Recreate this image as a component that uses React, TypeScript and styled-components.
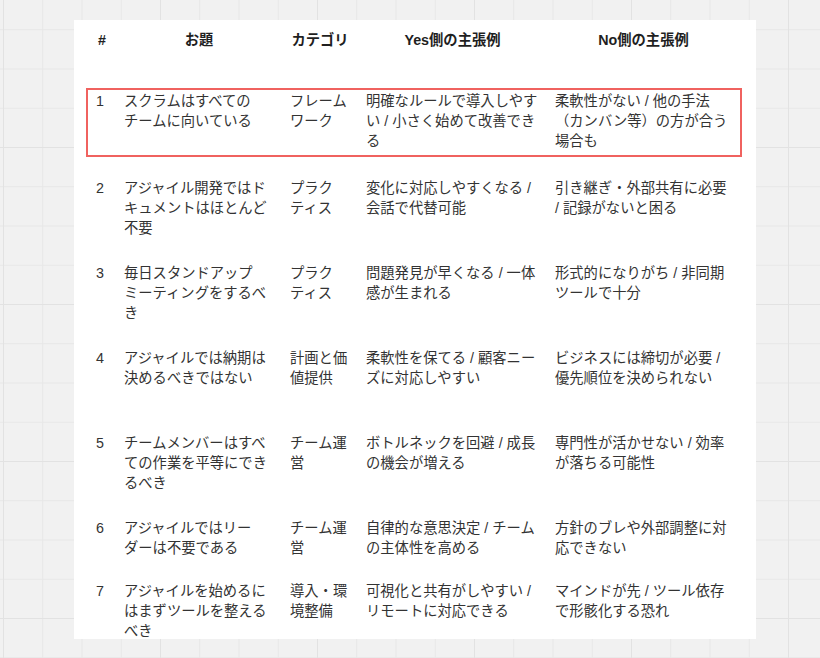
import React from 'react';
import styled, { createGlobalStyle } from 'styled-components';

type Topic = {
  no: number;
  title: string;
  category: string;
  yes: string;
  no_: string;
  height?: number;
  highlighted?: boolean;
};

const topics: Topic[] = [
  {
    no: 1,
    title: 'スクラムはすべてのチームに向いている',
    category: 'フレームワーク',
    yes: '明確なルールで導入しやすい / 小さく始めて改善できる',
    no_: '柔軟性がない / 他の手法（カンバン等）の方が合う場合も',
    height: 87,
    highlighted: true,
  },
  {
    no: 2,
    title: 'アジャイル開発ではドキュメントはほとんど不要',
    category: 'プラクティス',
    yes: '変化に対応しやすくなる / 会話で代替可能',
    no_: '引き継ぎ・外部共有に必要 / 記録がないと困る',
    height: 85,
  },
  {
    no: 3,
    title: '毎日スタンドアップミーティングをするべき',
    category: 'プラクティス',
    yes: '問題発見が早くなる / 一体感が生まれる',
    no_: '形式的になりがち / 非同期ツールで十分',
    height: 85,
  },
  {
    no: 4,
    title: 'アジャイルでは納期は決めるべきではない',
    category: '計画と価値提供',
    yes: '柔軟性を保てる / 顧客ニーズに対応しやすい',
    no_: 'ビジネスには締切が必要 / 優先順位を決められない',
    height: 85,
  },
  {
    no: 5,
    title: 'チームメンバーはすべての作業を平等にできるべき',
    category: 'チーム運営',
    yes: 'ボトルネックを回避 / 成長の機会が増える',
    no_: '専門性が活かせない / 効率が落ちる可能性',
    height: 85,
  },
  {
    no: 6,
    title: 'アジャイルではリーダーは不要である',
    category: 'チーム運営',
    yes: '自律的な意思決定 / チームの主体性を高める',
    no_: '方針のブレや外部調整に対応できない',
    height: 63,
  },
  {
    no: 7,
    title: 'アジャイルを始めるにはまずツールを整えるべき',
    category: '導入・環境整備',
    yes: '可視化と共有がしやすい / リモートに対応できる',
    no_: 'マインドが先 / ツール依存で形骸化する恐れ',
  },
];

const columns = '28px 166px 76px 189px 193px';

const GlobalStyle = createGlobalStyle`
  html, body {
    margin: 0;
    padding: 0;
  }
  body {
    font-family: "Liberation Sans", "Noto Sans CJK JP", sans-serif;
    background-color: #f1f1f1;
    background-image:
      linear-gradient(to right, #e2e2e2 1px, transparent 1px),
      linear-gradient(to bottom, #e2e2e2 1px, transparent 1px),
      linear-gradient(to right, #e7e7e7 1px, transparent 1px),
      linear-gradient(to bottom, #e7e7e7 1px, transparent 1px);
    background-size: 157px 157px, 157px 157px, 39.25px 39.25px, 39.25px 39.25px;
    background-position: 3px -10px, 3px -10px, 3px -10px, 3px -10px;
  }
`;

const Board = styled.div`
  width: 820px;
  height: 658px;
  box-sizing: border-box;
  padding: 20px 0 0 74px;
  overflow: hidden;
`;

const Card = styled.div`
  width: 682px;
  height: 619px;
  box-sizing: border-box;
  padding: 0 16px 0 14px;
  background: #ffffff;
  overflow: hidden;
`;

const HeaderRow = styled.div`
  display: grid;
  grid-template-columns: ${columns};
  height: 70px;
  box-sizing: border-box;
  padding-top: 10px;
`;

const HeaderCell = styled.div`
  padding: 0 8px;
  text-align: center;
  font-size: 14.3px;
  line-height: 20px;
  font-weight: 700;
  color: #1f1f1f;
`;

const Row = styled.div<{ $height?: number; $highlighted?: boolean }>`
  position: relative;
  display: grid;
  grid-template-columns: ${columns};
  align-items: start;
  box-sizing: border-box;
  padding-top: 1px;
  height: ${(p) => (p.$height ? `${p.$height}px` : 'auto')};

  ${(p) =>
    p.$highlighted &&
    `
    &::after {
      content: '';
      position: absolute;
      top: -2px;
      left: -2px;
      right: -2px;
      height: 69px;
      border: 2px solid #f0625f;
      box-sizing: border-box;
      pointer-events: none;
    }
  `}
`;

const Cell = styled.div`
  padding: 0 8px;
  font-size: 14.3px;
  line-height: 20px;
  color: #333333;
  line-break: strict;
`;

const App: React.FC = () => {
  return (
    <Board lang='ja'>
      <GlobalStyle />
      <Card>
        <HeaderRow>
          <HeaderCell>#</HeaderCell>
          <HeaderCell>お題</HeaderCell>
          <HeaderCell>カテゴリ</HeaderCell>
          <HeaderCell>Yes側の主張例</HeaderCell>
          <HeaderCell>No側の主張例</HeaderCell>
        </HeaderRow>
        {topics.map((t) => (
          <Row key={t.no} $height={t.height} $highlighted={t.highlighted}>
            <Cell>{t.no}</Cell>
            <Cell>{t.title}</Cell>
            <Cell>{t.category}</Cell>
            <Cell>{t.yes}</Cell>
            <Cell>{t.no_}</Cell>
          </Row>
        ))}
      </Card>
    </Board>
  );
};

export default App;
